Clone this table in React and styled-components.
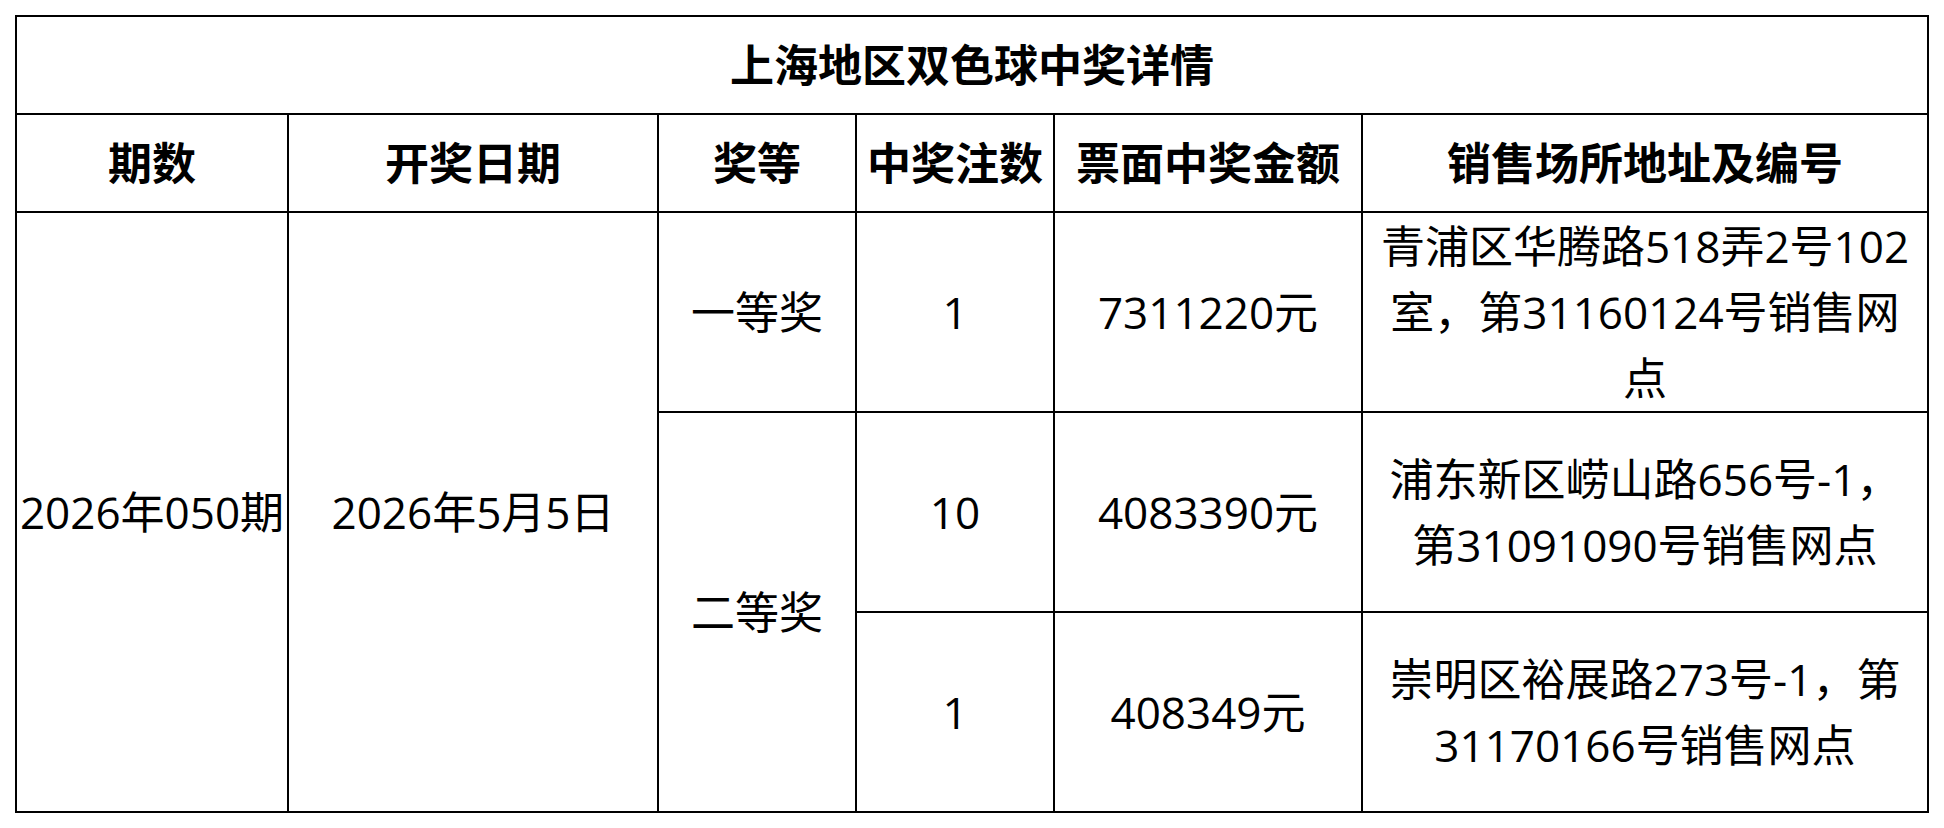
import styled, { createGlobalStyle } from 'styled-components'

const GlobalStyle = createGlobalStyle`
  html, body {
    margin: 0;
    padding: 0;
    background: #fff;
  }
  body {
    font-family: "Open Sans", "Noto Sans CJK SC", "Microsoft YaHei", sans-serif;
    color: #000;
  }
`

const Page = styled.div`
  padding: 15px;
`

const Table = styled.table`
  border-collapse: collapse;
  table-layout: fixed;
  width: 1914px;
  font-size: 44px;
  line-height: 1.5;
`

const Col = styled.col`
  width: ${p => p.$w}px;
`

const Row = styled.tr`
  height: ${p => p.$h}px;
`

const Title = styled.th`
  border: 2px solid #000;
  font-weight: 700;
  text-align: center;
  vertical-align: middle;
  padding: 0;
`

const Head = styled.th`
  border: 2px solid #000;
  font-weight: 700;
  text-align: center;
  vertical-align: middle;
  white-space: nowrap;
  padding: 0;
`

const Cell = styled.td`
  border: 2px solid #000;
  font-weight: 400;
  text-align: center;
  vertical-align: middle;
  white-space: ${p => (p.$wrap ? 'normal' : 'nowrap')};
  padding: ${p => (p.$wrap ? '0 15px' : '0')};
`

const columns = [272, 370, 198, 198, 308, 566]
const headers = ['期数', '开奖日期', '奖等', '中奖注数', '票面中奖金额', '销售场所地址及编号']

function App() {
  return (
    <Page>
      <GlobalStyle />
      <Table>
        <colgroup>
          {columns.map((w, i) => (
            <Col key={i} $w={w} />
          ))}
        </colgroup>
        <thead>
          <Row $h={98}>
            <Title colSpan={6}>上海地区双色球中奖详情</Title>
          </Row>
          <Row $h={98}>
            {headers.map(h => (
              <Head key={h}>{h}</Head>
            ))}
          </Row>
        </thead>
        <tbody>
          <Row $h={200}>
            <Cell rowSpan={3}>2026年050期</Cell>
            <Cell rowSpan={3}>2026年5月5日</Cell>
            <Cell>一等奖</Cell>
            <Cell>1</Cell>
            <Cell>7311220元</Cell>
            <Cell $wrap>青浦区华腾路518弄2号102室，第31160124号销售网点</Cell>
          </Row>
          <Row $h={200}>
            <Cell rowSpan={2}>二等奖</Cell>
            <Cell>10</Cell>
            <Cell>4083390元</Cell>
            <Cell $wrap>浦东新区崂山路656号-1，第31091090号销售网点</Cell>
          </Row>
          <Row $h={200}>
            <Cell>1</Cell>
            <Cell>408349元</Cell>
            <Cell $wrap>崇明区裕展路273号-1，第31170166号销售网点</Cell>
          </Row>
        </tbody>
      </Table>
    </Page>
  )
}

export default App
